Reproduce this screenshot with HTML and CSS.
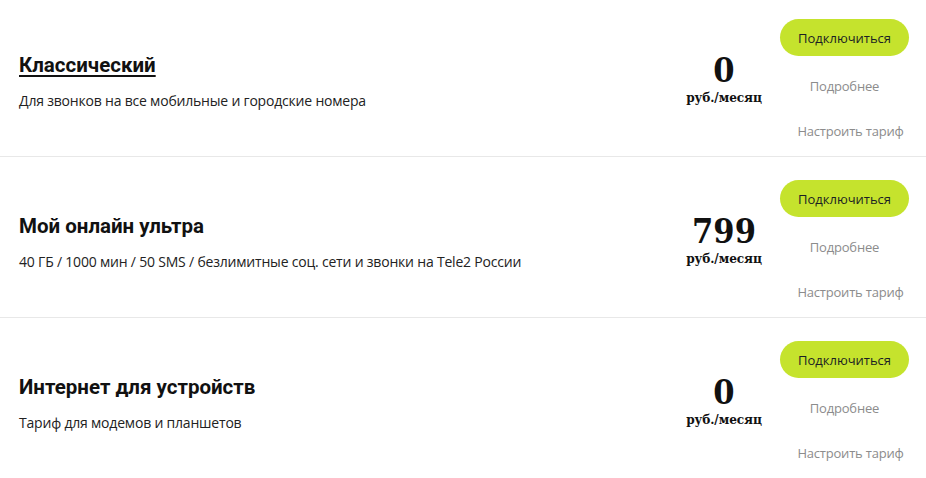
FILE: index.html
```html
<!DOCTYPE html>
<html lang="ru">
<head>
<meta charset="utf-8">
<link rel="stylesheet" href="styles.css">
</head>
<body>
<div class="list">
  <div class="tariff tariff-first">
    <div class="info">
      <a class="title title-link" href="#">Классический</a>
      <div class="desc">Для звонков на все мобильные и городские номера</div>
    </div>
    <div class="price">
      <div class="amount">0</div>
      <div class="unit">руб./месяц</div>
    </div>
    <div class="actions">
      <button class="connect">Подключиться</button>
      <a class="link" href="#">Подробнее</a>
      <a class="link link-setup" href="#">Настроить тариф</a>
    </div>
  </div>
  <div class="tariff">
    <div class="info">
      <div class="title">Мой онлайн ультра</div>
      <div class="desc">40 ГБ / 1000 мин / 50 SMS / безлимитные соц. сети и звонки на Tele2 России</div>
    </div>
    <div class="price">
      <div class="amount">799</div>
      <div class="unit">руб./месяц</div>
    </div>
    <div class="actions">
      <button class="connect">Подключиться</button>
      <a class="link" href="#">Подробнее</a>
      <a class="link link-setup" href="#">Настроить тариф</a>
    </div>
  </div>
  <div class="tariff tariff-last">
    <div class="info">
      <div class="title">Интернет для устройств</div>
      <div class="desc">Тариф для модемов и планшетов</div>
    </div>
    <div class="price">
      <div class="amount">0</div>
      <div class="unit">руб./месяц</div>
    </div>
    <div class="actions">
      <button class="connect">Подключиться</button>
      <a class="link" href="#">Подробнее</a>
      <a class="link link-setup" href="#">Настроить тариф</a>
    </div>
  </div>
</div>
</body>
</html>
```
FILE: styles.css
```css
* { box-sizing: border-box; }
html, body {
  margin: 0;
  padding: 0;
  background: #ffffff;
}
body {
  font-family: "Open Sans", "Noto Sans", sans-serif;
  color: #1a1a1a;
  overflow: hidden;
}
.list {
  margin-top: -4px;
}
.tariff {
  display: flex;
  align-items: flex-start;
  padding: 23px 17px 2px 19px;
  height: 161px;
  border-bottom: 1px solid #e8e8e8;
}
.tariff-last {
  border-bottom: none;
}
.info {
  flex: 1;
  padding-top: 32px;
}
.title {
  display: inline-block;
  font-family: Roboto, "Open Sans", sans-serif;
  font-size: 20.5px;
  font-weight: 700;
  line-height: 28px;
  color: #111;
  text-decoration: none;
}
.title-link {
  text-decoration: underline;
  text-decoration-thickness: 2px;
  text-underline-offset: 3px;
}
.desc {
  margin-top: 12px;
  font-size: 14px;
  line-height: 20px;
  color: #222;
  letter-spacing: -0.2px;
}
.price {
  width: 100px;
  margin-right: 6px;
  padding-top: 32px;
  text-align: center;
  font-family: "DejaVu Serif Condensed", "DejaVu Serif", serif;
  font-weight: bold;
  color: #111;
}
.amount {
  font-size: 34px;
  line-height: 38px;
}
.unit {
  font-size: 13.5px;
  line-height: 16px;
  letter-spacing: -0.1px;
}
.actions {
  width: 129px;
  display: flex;
  flex-direction: column;
  align-items: center;
}
.connect {
  width: 129px;
  height: 37px;
  border: none;
  border-radius: 19px;
  background: #c5e32d;
  color: #1c1f24;
  font-family: "Open Sans", "Noto Sans", sans-serif;
  font-size: 13px;
  font-weight: 500;
  padding: 0;
  margin-bottom: 8px;
}
.link {
  display: block;
  height: 45px;
  line-height: 45px;
  font-size: 13px;
  color: #8c8c8c;
  text-decoration: none;
  letter-spacing: -0.2px;
}
.link-setup {
  padding-left: 12px;
  white-space: nowrap;
}
```
